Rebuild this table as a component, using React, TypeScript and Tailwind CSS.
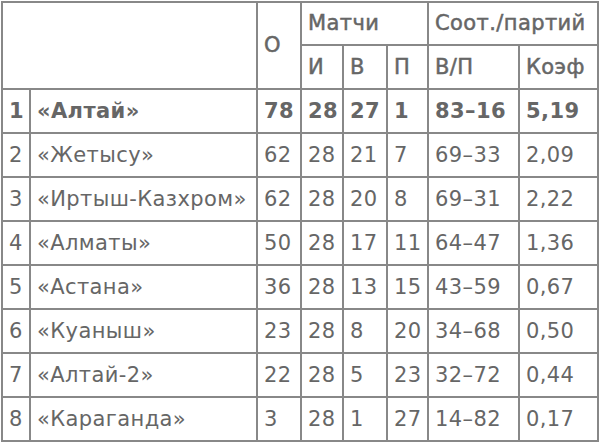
const rows = [
  ['1', '«Алтай»', '78', '28', '27', '1', '83–16', '5,19'],
  ['2', '«Жетысу»', '62', '28', '21', '7', '69–33', '2,09'],
  ['3', '«Иртыш-Казхром»', '62', '28', '20', '8', '69–31', '2,22'],
  ['4', '«Алматы»', '50', '28', '17', '11', '64–47', '1,36'],
  ['5', '«Астана»', '36', '28', '13', '15', '43–59', '0,67'],
  ['6', '«Куаныш»', '23', '28', '8', '20', '34–68', '0,50'],
  ['7', '«Алтай-2»', '22', '28', '5', '23', '32–72', '0,44'],
  ['8', '«Караганда»', '3', '28', '1', '27', '14–82', '0,17'],
];

const cell = 'border-2 border-[#888] px-[6px] text-left align-middle whitespace-nowrap';
const head = 'font-normal [-webkit-text-stroke:0.5px_#666]';

export default function App() {
  return (
    <div className="w-[600px] h-[444px] bg-white pt-[1px] pl-[1px] font-['DejaVu_Sans',Verdana,sans-serif] text-[21px] tracking-[0.4px] leading-none text-[#666]">
      <table className="table-fixed border-collapse w-[596px]">
        <colgroup>
          <col className="w-[28px]" />
          <col className="w-[227px]" />
          <col className="w-[44px]" />
          <col className="w-[42px]" />
          <col className="w-[44px]" />
          <col className="w-[41px]" />
          <col className="w-[91px]" />
          <col className="w-[79px]" />
        </colgroup>
        <thead>
          <tr className="h-[43px]">
            <th className={cell} colSpan={2} rowSpan={2}></th>
            <th className={`${cell} ${head}`} rowSpan={2}>О</th>
            <th className={`${cell} ${head}`} colSpan={3}>Матчи</th>
            <th className={`${cell} ${head}`} colSpan={2}>Соот./партий</th>
          </tr>
          <tr className="h-[44px]">
            <th className={`${cell} ${head}`}>И</th>
            <th className={`${cell} ${head}`}>В</th>
            <th className={`${cell} ${head}`}>П</th>
            <th className={`${cell} ${head}`}>В/П</th>
            <th className={`${cell} ${head}`}>Коэф</th>
          </tr>
        </thead>
        <tbody>
          {rows.map((r, i) => (
            <tr key={r[0]} className={i === 0 ? 'h-[44px] font-bold' : 'h-[44px]'}>
              {r.map((v, j) => (
                <td key={j} className={j === 0 ? `${cell} px-[4px]` : cell}>
                  {v}
                </td>
              ))}
            </tr>
          ))}
        </tbody>
      </table>
    </div>
  );
}
